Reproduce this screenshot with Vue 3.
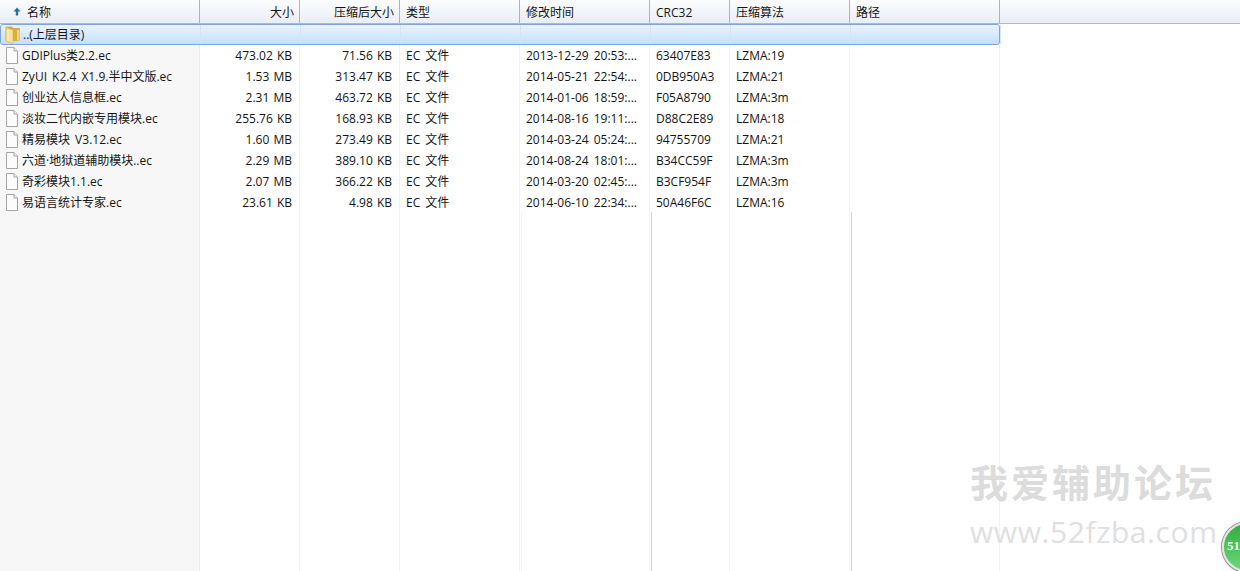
<script setup>
const headers = [
  { label: '名称', sort: true },
  { label: '大小', right: true },
  { label: '压缩后大小', right: true },
  { label: '类型' },
  { label: '修改时间' },
  { label: 'CRC32' },
  { label: '压缩算法' },
  { label: '路径' }
]

const files = [
  { name: 'GDIPlus类2.2.ec', size: '473.02 KB', packed: '71.56 KB', time: '2013-12-29 20:53:...', crc: '63407E83', method: 'LZMA:19' },
  { name: 'ZyUI K2.4 X1.9.半中文版.ec', size: '1.53 MB', packed: '313.47 KB', time: '2014-05-21 22:54:...', crc: '0DB950A3', method: 'LZMA:21' },
  { name: '创业达人信息框.ec', size: '2.31 MB', packed: '463.72 KB', time: '2014-01-06 18:59:...', crc: 'F05A8790', method: 'LZMA:3m' },
  { name: '淡妆二代内嵌专用模块.ec', size: '255.76 KB', packed: '168.93 KB', time: '2014-08-16 19:11:...', crc: 'D88C2E89', method: 'LZMA:18' },
  { name: '精易模块 V3.12.ec', size: '1.60 MB', packed: '273.49 KB', time: '2014-03-24 05:24:...', crc: '94755709', method: 'LZMA:21' },
  { name: '六道·地狱道辅助模块..ec', size: '2.29 MB', packed: '389.10 KB', time: '2014-08-24 18:01:...', crc: 'B34CC59F', method: 'LZMA:3m' },
  { name: '奇彩模块1.1.ec', size: '2.07 MB', packed: '366.22 KB', time: '2014-03-20 02:45:...', crc: 'B3CF954F', method: 'LZMA:3m' },
  { name: '易语言统计专家.ec', size: '23.61 KB', packed: '4.98 KB', time: '2014-06-10 22:34:...', crc: '50A46F6C', method: 'LZMA:16' }
]
</script>

<template>
  <div class="window">
    <div class="header">
      <div class="head-row">
        <div v-for="h in headers" :key="h.label" class="head-cell" :class="{ right: h.right }">
          <svg v-if="h.sort" class="sort" width="8" height="9" viewBox="0 0 8 9">
            <path d="M4 0.5 L7.5 4.5 H5.2 V8.5 H2.8 V4.5 H0.5 Z" fill="#2f6f9f" />
          </svg>
          <span>{{ h.label }}</span>
        </div>
      </div>
    </div>

    <div class="body">
      <div class="row up-row">
        <div class="cell name">
          <svg class="folder" width="16" height="18" viewBox="0 0 16 18">
            <path d="M1 1 H7 L8 2.5 H14.5 V14.5 H1 Z" fill="#d9ae3f" stroke="#c2962c" stroke-width="0.6" />
            <path d="M1 1.5 L8 4 V17.5 L1 15 Z" fill="#f6e39a" stroke="#d6ae45" stroke-width="0.6" />
            <path d="M3 3.5 V14.5" stroke="#fdf3c4" stroke-width="1.2" />
            <path d="M12 4 H14.5 V14.5 H12 Z" fill="#f2d67c" />
          </svg>
          <span>..(上层目录)</span>
        </div>
        <div v-for="i in 7" :key="i" class="cell"></div>
      </div>

      <div v-for="f in files" :key="f.name" class="row">
        <div class="cell name">
          <svg class="file" width="14" height="17" viewBox="0 0 14 17">
            <path d="M1.5 0.5 H9 L12.5 4 V16.5 H1.5 Z" fill="#fcfcfc" stroke="#a4a4a4" />
            <path d="M9 0.5 V4 H12.5" fill="#efefef" stroke="#a4a4a4" />
          </svg>
          <span>{{ f.name }}</span>
        </div>
        <div class="cell right">{{ f.size }}</div>
        <div class="cell right">{{ f.packed }}</div>
        <div class="cell">EC 文件</div>
        <div class="cell">{{ f.time }}</div>
        <div class="cell">{{ f.crc }}</div>
        <div class="cell">{{ f.method }}</div>
        <div class="cell"></div>
      </div>

      <div class="row filler">
        <div class="cell name"></div>
        <div class="cell"></div>
        <div class="cell"></div>
        <div class="cell shift"></div>
        <div class="cell shift strong"></div>
        <div class="cell"></div>
        <div class="cell shift strong"></div>
        <div class="cell"></div>
      </div>
    </div>

    <div class="watermark">
      <div class="mark-title">我爱辅助论坛</div>
      <div class="mark-url">www.52fzba.com</div>
    </div>

    <div class="badge"><span>51</span></div>
  </div>
</template>

<style>
html, body {
  margin: 0;
  overflow: hidden;
  background: #fff;
}
</style>

<style scoped>
.window {
  position: relative;
  width: 1240px;
  height: 571px;
  overflow: hidden;
  display: flex;
  flex-direction: column;
  background: #fff;
  color: #141414;
  font-family: "Open Sans", "Noto Sans CJK SC", sans-serif;
  font-size: 12px;
}
.header {
  height: 23px;
  flex: none;
  border-bottom: 1px solid #b0b9c6;
  background: linear-gradient(#fbfcfd, #e9eef5);
}
.head-row, .row {
  display: grid;
  grid-template-columns: 200px 100px 100px 120px 130px 80px 120px 150px;
  width: 1000px;
}
.head-row {
  height: 23px;
}
.head-cell {
  display: flex;
  align-items: center;
  padding: 0 5px 1px 6px;
  box-sizing: border-box;
  border-right: 1px solid #adb3bf;
  white-space: nowrap;
}
.head-cell span {
  position: relative;
  top: 1px;
}
.head-cell:first-child {
  padding-left: 13px;
}
.head-cell.right {
  justify-content: flex-end;
}
.sort {
  margin-right: 6px;
}
.body {
  flex: 1;
  display: flex;
  flex-direction: column;
}
.row {
  height: 21px;
  flex: none;
}
.cell {
  display: flex;
  align-items: center;
  padding: 0 6px;
  border-right: 1px solid #eef3fa;
  white-space: nowrap;
  line-height: 21px;
  word-spacing: 2px;
}
.cell.right {
  justify-content: flex-end;
  padding-right: 7px;
  word-spacing: 1px;
}
.name {
  background: #f7f7f7;
  padding-left: 5px;
  border-right-color: #e6ecf4;
}
.file {
  margin: 0 3px 0 0;
}
.up-row {
  box-sizing: border-box;
  height: 21px;
  border: 1px solid #7ea6d8;
  border-radius: 3px;
  background: linear-gradient(#eaf3fe, #c6dffc);
}
.up-row .cell {
  background: none;
  border-right-color: #d3e3f8;
  line-height: 18px;
  height: 19px;
}
.folder {
  margin: 1px 2px 0 -1px;
}
.filler {
  flex: 1;
  height: auto;
  margin-top: -1px;
}
.filler .cell.shift {
  position: relative;
}
.filler .cell.shift::after {
  content: "";
  position: absolute;
  right: -3px;
  top: 0;
  bottom: 0;
  width: 1px;
  background: #eef3fa;
}
.filler .cell.strong::after {
  background: #c6d9f2;
}
.watermark {
  position: absolute;
  left: 970px;
  top: 460px;
  color: #dcdcdc;
  pointer-events: none;
}
.mark-title {
  font-family: "Noto Sans CJK SC", sans-serif;
  font-weight: 700;
  font-size: 38px;
  line-height: 42px;
  letter-spacing: 3px;
}
.mark-url {
  margin-top: 13px;
  font-family: "Open Sans", sans-serif;
  font-size: 30px;
  line-height: 34px;
  letter-spacing: 0.6px;
  color: #e0e0e0;
}
.badge {
  position: absolute;
  left: 1222px;
  top: 522px;
  width: 46px;
  height: 46px;
  border-radius: 50%;
  border: 2px solid #e4e4e4;
  box-shadow: 0 0 0 1px #8f8f8f, 0 1px 2px rgba(0, 0, 0, 0.4);
  background: linear-gradient(#2fae3d, #6bd878);
}
.badge span {
  position: absolute;
  left: 3px;
  top: 14px;
  font-family: "Liberation Serif", serif;
  font-weight: 700;
  font-size: 13px;
  color: #fff;
}
</style>
